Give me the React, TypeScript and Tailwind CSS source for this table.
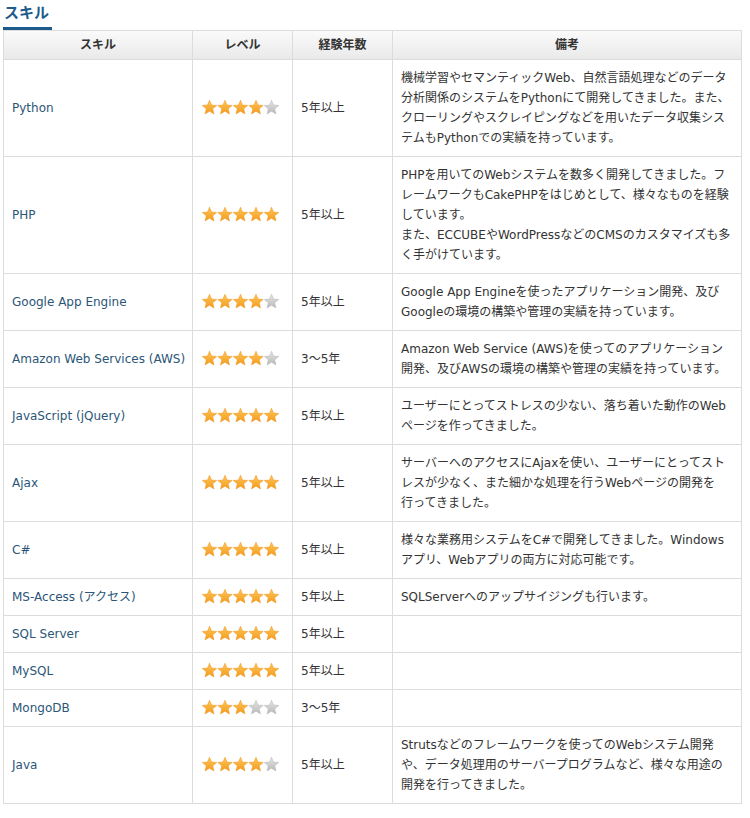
import React from 'react';

type Skill = {
  name: string;
  level: number;
  years: string;
  notes: string[];
};

const skills: Skill[] = [
  {
    name: 'Python',
    level: 4,
    years: '5年以上',
    notes: [
      '機械学習やセマンティックWeb、自然言語処理などのデータ',
      '分析関係のシステムをPythonにて開発してきました。また、',
      'クローリングやスクレイピングなどを用いたデータ収集シス',
      'テムもPythonでの実績を持っています。',
    ],
  },
  {
    name: 'PHP',
    level: 5,
    years: '5年以上',
    notes: [
      'PHPを用いてのWebシステムを数多く開発してきました。フ',
      'レームワークもCakePHPをはじめとして、様々なものを経験',
      'しています。',
      'また、ECCUBEやWordPressなどのCMSのカスタマイズも多',
      'く手がけています。',
    ],
  },
  {
    name: 'Google App Engine',
    level: 4,
    years: '5年以上',
    notes: [
      'Google App Engineを使ったアプリケーション開発、及び',
      'Googleの環境の構築や管理の実績を持っています。',
    ],
  },
  {
    name: 'Amazon Web Services (AWS)',
    level: 4,
    years: '3～5年',
    notes: [
      'Amazon Web Service (AWS)を使ってのアプリケーション',
      '開発、及びAWSの環境の構築や管理の実績を持っています。',
    ],
  },
  {
    name: 'JavaScript (jQuery)',
    level: 5,
    years: '5年以上',
    notes: [
      'ユーザーにとってストレスの少ない、落ち着いた動作のWeb',
      'ページを作ってきました。',
    ],
  },
  {
    name: 'Ajax',
    level: 5,
    years: '5年以上',
    notes: [
      'サーバーへのアクセスにAjaxを使い、ユーザーにとってスト',
      'レスが少なく、また細かな処理を行うWebページの開発を',
      '行ってきました。',
    ],
  },
  {
    name: 'C#',
    level: 5,
    years: '5年以上',
    notes: [
      '様々な業務用システムをC#で開発してきました。Windows',
      'アプリ、Webアプリの両方に対応可能です。',
    ],
  },
  {
    name: 'MS-Access (アクセス)',
    level: 5,
    years: '5年以上',
    notes: ['SQLServerへのアップサイジングも行います。'],
  },
  { name: 'SQL Server', level: 5, years: '5年以上', notes: [] },
  { name: 'MySQL', level: 5, years: '5年以上', notes: [] },
  { name: 'MongoDB', level: 3, years: '3～5年', notes: [] },
  {
    name: 'Java',
    level: 4,
    years: '5年以上',
    notes: [
      'Strutsなどのフレームワークを使ってのWebシステム開発',
      'や、データ処理用のサーバープログラムなど、様々な用途の',
      '開発を行ってきました。',
    ],
  },
];

// star outline in a 15.5 x 15 box
const starPoints = (ox: number) => {
  const cx = ox + 7.5;
  const cy = 7.8;
  const pts: string[] = [];
  for (let i = 0; i < 10; i++) {
    const r = i % 2 === 0 ? 7.6 : 3.4;
    const a = (Math.PI / 5) * i - Math.PI / 2;
    pts.push(`${(cx + r * Math.cos(a)).toFixed(2)},${(cy + r * Math.sin(a)).toFixed(2)}`);
  }
  return pts.join(' ');
};

function Stars({ level }: { level: number }) {
  return (
    <svg width="78" height="16" viewBox="0 0 78 16" className="block">
      <defs>
        <linearGradient id="starOn" x1="0" y1="0" x2="0" y2="1">
          <stop offset="0" stopColor="#ffc85a" />
          <stop offset="1" stopColor="#f39a1c" />
        </linearGradient>
        <linearGradient id="starOff" x1="0" y1="0" x2="0" y2="1">
          <stop offset="0" stopColor="#e6e6e6" />
          <stop offset="1" stopColor="#b9b9b9" />
        </linearGradient>
      </defs>
      {[0, 1, 2, 3, 4].map((i) => (
        <polygon
          key={i}
          points={starPoints(i * 15.5)}
          fill={i < level ? 'url(#starOn)' : 'url(#starOff)'}
          stroke={i < level ? '#ee9216' : '#b5b5b5'}
          strokeWidth="0.5"
          strokeLinejoin="round"
        />
      ))}
    </svg>
  );
}

export default function App() {
  return (
    <div
      className="min-h-screen bg-white pl-[3px] pt-[2px] text-[12px] text-[#333]"
      style={{ fontFamily: '"DejaVu Sans", "Noto Sans CJK JP", sans-serif' }}
    >
      {/* Section title */}
      <div>
        <span className="inline-block border-b-[3px] border-[#1d5b8a] pb-[3px] pl-[1px] pr-[3px] text-[15px] font-bold leading-[22px] text-[#1d5b8a]">
          スキル
        </span>
      </div>

      <table className="w-[738px] table-fixed border-collapse border border-[#dcdcdc]">
        <colgroup>
          <col className="w-[189px]" />
          <col className="w-[100px]" />
          <col className="w-[100px]" />
          <col className="w-[349px]" />
        </colgroup>
        <thead>
          <tr className="bg-gradient-to-b from-[#fafafa] to-[#e9e9e9]">
            {['スキル', 'レベル', '経験年数', '備考'].map((h) => (
              <th
                key={h}
                className="border border-[#dcdcdc] px-2 py-1 text-center text-[12px] font-bold leading-[20px] text-[#333]"
              >
                {h}
              </th>
            ))}
          </tr>
        </thead>
        <tbody>
          {skills.map((s) => (
            <tr key={s.name}>
              <td className="whitespace-nowrap border border-[#dcdcdc] px-2 py-2 align-middle leading-[20px] text-[#2b5677]">
                {s.name}
              </td>
              <td className="border border-[#dcdcdc] py-2 pl-[9px] pr-2 align-middle leading-[20px]">
                <Stars level={s.level} />
              </td>
              <td className="whitespace-nowrap border border-[#dcdcdc] px-2 py-2 align-middle leading-[20px]">
                {s.years}
              </td>
              <td className="whitespace-nowrap border border-[#dcdcdc] px-2 py-2 align-middle leading-[20px]">
                {s.notes.map((line, i) => (
                  <React.Fragment key={i}>
                    {i > 0 && <br />}
                    {line}
                  </React.Fragment>
                ))}
              </td>
            </tr>
          ))}
        </tbody>
      </table>
    </div>
  );
}
